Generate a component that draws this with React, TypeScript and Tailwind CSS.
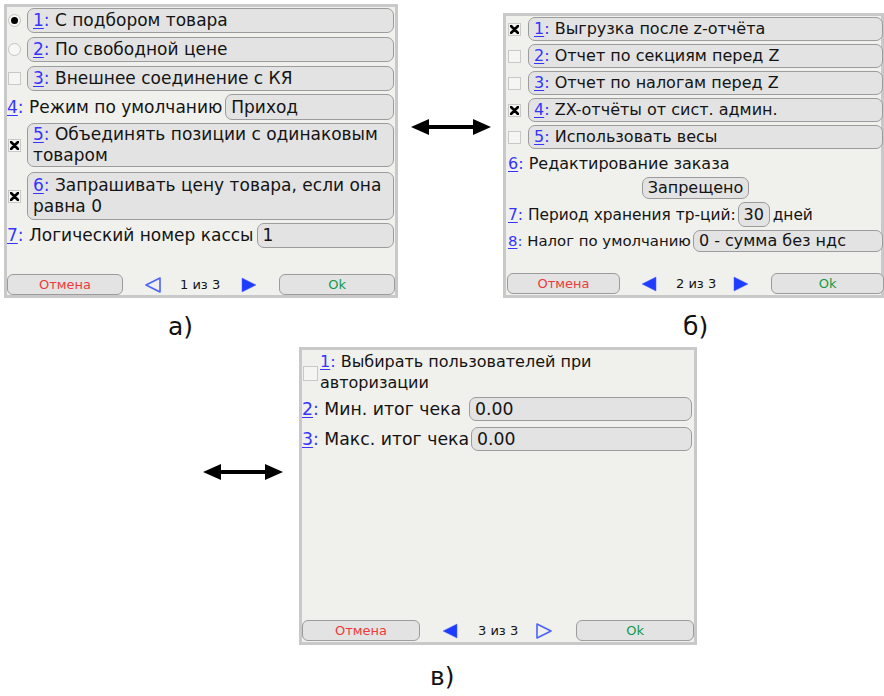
import React from "react";

const BLUE = "text-[#3535ff]";

function Num({ n }: { n: string }) {
  return (
    <>
      <span className={`${BLUE} underline underline-offset-2`}>{n}</span>
      <span className={BLUE}>:</span>{" "}
    </>
  );
}

function Check({ on, size = 13 }: { on: boolean; size?: number }) {
  return (
    <div
      className="bg-[#f5f5f3] border border-[#c8c8c6] flex items-center justify-center shrink-0"
      style={{ width: size, height: size }}
    >
      {on && (
        <svg width="9" height="9" viewBox="0 0 9 9">
          <path d="M1 1 L8 8 M8 1 L1 8" stroke="#000" strokeWidth="2.6" strokeLinecap="round" />
        </svg>
      )}
    </div>
  );
}

function Radio({ on }: { on: boolean }) {
  return (
    <div className="w-[13px] h-[13px] rounded-full bg-[#f7f7f5] border border-[#c4c4c2] flex items-center justify-center shrink-0">
      {on && <div className="w-[7px] h-[7px] rounded-full bg-black" />}
    </div>
  );
}

function Box({ children, className = "" }: { children: React.ReactNode; className?: string }) {
  return (
    <div
      className={`rounded-[7px] border border-[#9c9c9c] bg-[#e3e3e3] px-[5px] flex items-center ${className}`}
    >
      {children}
    </div>
  );
}

function Arrow() {
  return (
    <svg width="80" height="20" viewBox="0 0 80 20">
      <polygon points="0,10 18,2 18,18" fill="#000" />
      <polygon points="80,10 62,2 62,18" fill="#000" />
      <rect x="14" y="8" width="52" height="4" fill="#000" />
    </svg>
  );
}

function TriLeft({ filled }: { filled: boolean }) {
  return (
    <svg width="16" height="16" viewBox="0 0 16 16" className="shrink-0">
      <polygon
        points="15,1 1,8 15,15"
        fill={filled ? "#1e3cff" : "none"}
        stroke="#4a63ff"
        strokeWidth={filled ? 0.5 : 1.6}
        strokeLinejoin="round"
      />
    </svg>
  );
}

function TriRight({ filled }: { filled: boolean }) {
  return (
    <svg width="16" height="16" viewBox="0 0 16 16" className="shrink-0">
      <polygon
        points="1,1 15,8 1,15"
        fill={filled ? "#1e3cff" : "none"}
        stroke="#4a63ff"
        strokeWidth={filled ? 0.5 : 1.6}
        strokeLinejoin="round"
      />
    </svg>
  );
}

function Footer({
  page,
  leftFilled,
  rightFilled,
  btnW,
  gapA,
  gapB,
  gapC,
  gapD,
}: {
  page: string;
  leftFilled: boolean;
  rightFilled: boolean;
  btnW: number;
  gapA: string;
  gapB: string;
  gapC: string;
  gapD: string;
}) {
  return (
    <div className="flex items-center h-[21px] text-[13px] leading-[16px]">
      <div
        className="h-[21px] shrink-0 rounded-[6px] border border-[#9c9c9c] bg-[#e3e3e3] flex items-center justify-center text-[#ee3a3a]"
        style={{ width: btnW }}
      >
        Отмена
      </div>
      <div className={`${gapA} shrink-0`} />
      <TriLeft filled={leftFilled} />
      <div className={`${gapB} shrink-0`} />
      <span className="text-[#141414] whitespace-nowrap shrink-0">{page}</span>
      <div className={`${gapC} shrink-0`} />
      <TriRight filled={rightFilled} />
      <div className={`${gapD} shrink-0`} />
      <div
        className="h-[21px] shrink-0 rounded-[6px] border border-[#9c9c9c] bg-[#e3e3e3] flex items-center justify-center text-[#129a4a]"
        style={{ width: btnW }}
      >
        Ok
      </div>
    </div>
  );
}

function PanelA() {
  return (
    <div className="w-[394px] h-[294px] border-[3px] border-[#c9c9c9] bg-[#f0f0ec] flex flex-col text-[17px] leading-[21px] text-[#141414]">
      <div className="flex flex-col pt-[1px] pr-[1px]">
        <div className="flex items-center">
          <div className="w-[20px] pl-[1px]"><Radio on /></div>
          <Box className="flex-1 h-[25px]"><span><Num n="1" />С подбором товара</span></Box>
        </div>
        <div className="flex items-center mt-[4px]">
          <div className="w-[20px] pl-[1px]"><Radio on={false} /></div>
          <Box className="flex-1 h-[25px]"><span><Num n="2" />По свободной цене</span></Box>
        </div>
        <div className="flex items-center mt-[4px]">
          <div className="w-[20px] pl-[1px]"><Check on={false} /></div>
          <Box className="flex-1 h-[25px]"><span><Num n="3" />Внешнее соединение с КЯ</span></Box>
        </div>
        <div className="flex items-center h-[26px] mt-[3px]">
          <span className="whitespace-nowrap"><Num n="4" />Режим по умолчанию</span>
          <Box className="flex-1 h-[26px] ml-[3px]">Приход</Box>
        </div>
        <div className="flex items-center mt-[3px]">
          <div className="w-[20px] pl-[1px]"><Check on /></div>
          <Box className="flex-1 h-[44px]"><span><Num n="5" />Объединять позиции с одинаковым товаром</span></Box>
        </div>
        <div className="flex items-center mt-[5px]">
          <div className="w-[20px] pl-[1px]"><Check on /></div>
          <Box className="flex-1 h-[48px]"><span><Num n="6" />Запрашивать цену товара, если она равна 0</span></Box>
        </div>
        <div className="flex items-center h-[25px] mt-[3px]">
          <span className="whitespace-nowrap"><Num n="7" />Логический номер кассы</span>
          <Box className="flex-1 h-[25px] ml-[3px]">1</Box>
        </div>
      </div>
      <div className="mt-auto pr-[1px]">
        <Footer page="1 из 3" leftFilled={false} rightFilled btnW={116} gapA="w-[22px]" gapB="w-[19px]" gapC="w-[21px]" gapD="w-[22px]" />
      </div>
    </div>
  );
}

function PanelB() {
  return (
    <div className="w-[381px] h-[285px] border-[3px] border-[#c9c9c9] bg-[#f0f0ec] flex flex-col text-[16px] leading-[20px] text-[#141414]">
      <div className="flex flex-col gap-[3px] pt-[1px]">
        {[
          ["1", "Выгрузка после z-отчёта", true],
          ["2", "Отчет по секциям перед Z", false],
          ["3", "Отчет по налогам перед Z", false],
          ["4", "ZX-отчёты от сист. админ.", true],
          ["5", "Использовать весы", false],
        ].map(([n, t, on]) => (
          <div key={n as string} className="flex items-center">
            <div className="w-[22px] pl-[2px]"><Check on={on as boolean} /></div>
            <Box className="flex-1 h-[24px] mr-[-2px]"><span><Num n={n as string} />{t as string}</span></Box>
          </div>
        ))}
        <div className="pl-[2px] pt-[2px] h-[22px]"><Num n="6" />Редактирование заказа</div>
        <div className="flex justify-center pl-[4px]">
          <Box className="h-[22px] w-[107px] justify-center !px-0">Запрещено</Box>
        </div>
        <div className="flex items-center pl-[2px] text-[15.4px] h-[25px]">
          <span className="whitespace-nowrap"><Num n="7" />Период хранения тр-ций:</span>
          <Box className="h-[25px] w-[32px] ml-[2px] justify-center !px-0 text-[16px]">30</Box>
          <span className="ml-[3px] whitespace-nowrap">дней</span>
        </div>
        <div className="flex items-center pl-[2px] text-[14.9px] h-[22px]">
          <span className="whitespace-nowrap"><Num n="8" />Налог по умолчанию</span>
          <Box className="h-[22px] flex-1 ml-[2px] mr-[-2px] text-[16px]">0 - сумма без ндс</Box>
        </div>
      </div>
      <div className="mt-auto pl-[1px] pb-[1px]">
        <Footer page="2 из 3" leftFilled rightFilled btnW={113} gapA="w-[21px]" gapB="w-[19px]" gapC="w-[17px]" gapD="w-[22px]" />
      </div>
    </div>
  );
}

function PanelC() {
  return (
    <div className="w-[398px] h-[298px] border-[3px] border-[#c9c9c9] bg-[#f0f0ec] flex flex-col text-[16px] leading-[20px] text-[#141414]">
      <div className="flex flex-col pr-[2px]">
        <div className="flex items-center pt-[1px]">
          <div className="w-[18px] pl-[1px] pt-[3px]"><Check on={false} size={15} /></div>
          <div className="leading-[21px]"><Num n="1" />Выбирать пользователей при<br />авторизации</div>
        </div>
        <div className="flex items-center mt-[4px] text-[17.3px]">
          <span className="whitespace-nowrap pr-[8px]"><Num n="2" />Мин. итог чека</span>
          <Box className="flex-1 h-[24px]">0.00</Box>
        </div>
        <div className="flex items-center mt-[6px] text-[17.3px]">
          <span className="whitespace-nowrap pr-[2px]"><Num n="3" />Макс. итог чека</span>
          <Box className="flex-1 h-[24px]">0.00</Box>
        </div>
      </div>
      <div className="mt-auto pr-[1px] pb-[1px]">
        <Footer page="3 из 3" leftFilled rightFilled={false} btnW={118} gapA="w-[22px]" gapB="w-[20px]" gapC="w-[18px]" gapD="w-[24px]" />
      </div>
    </div>
  );
}

export default function App() {
  return (
    <div className="w-[884px] h-[696px] bg-white overflow-hidden font-['DejaVu_Sans',sans-serif]">
      <div className="flex items-start">
        <div className="ml-[4px] mt-[4px]"><PanelA /></div>
        <div className="w-[107px] flex justify-center mt-[117px]"><Arrow /></div>
        <div className="mt-[13px]"><PanelB /></div>
      </div>
      <div className="flex text-[25px] leading-[28px] text-[#111] mt-[15px]">
        <span className="ml-[168px]">а)</span>
        <span className="ml-[490px]">б)</span>
      </div>
      <div className="flex items-start mt-[6px]">
        <div className="ml-[203px] mt-[115px]"><Arrow /></div>
        <div className="ml-[16px]"><PanelC /></div>
      </div>
      <div className="text-[25px] leading-[28px] text-[#111] ml-[430px] mt-[18px]">в)</div>
    </div>
  );
}
